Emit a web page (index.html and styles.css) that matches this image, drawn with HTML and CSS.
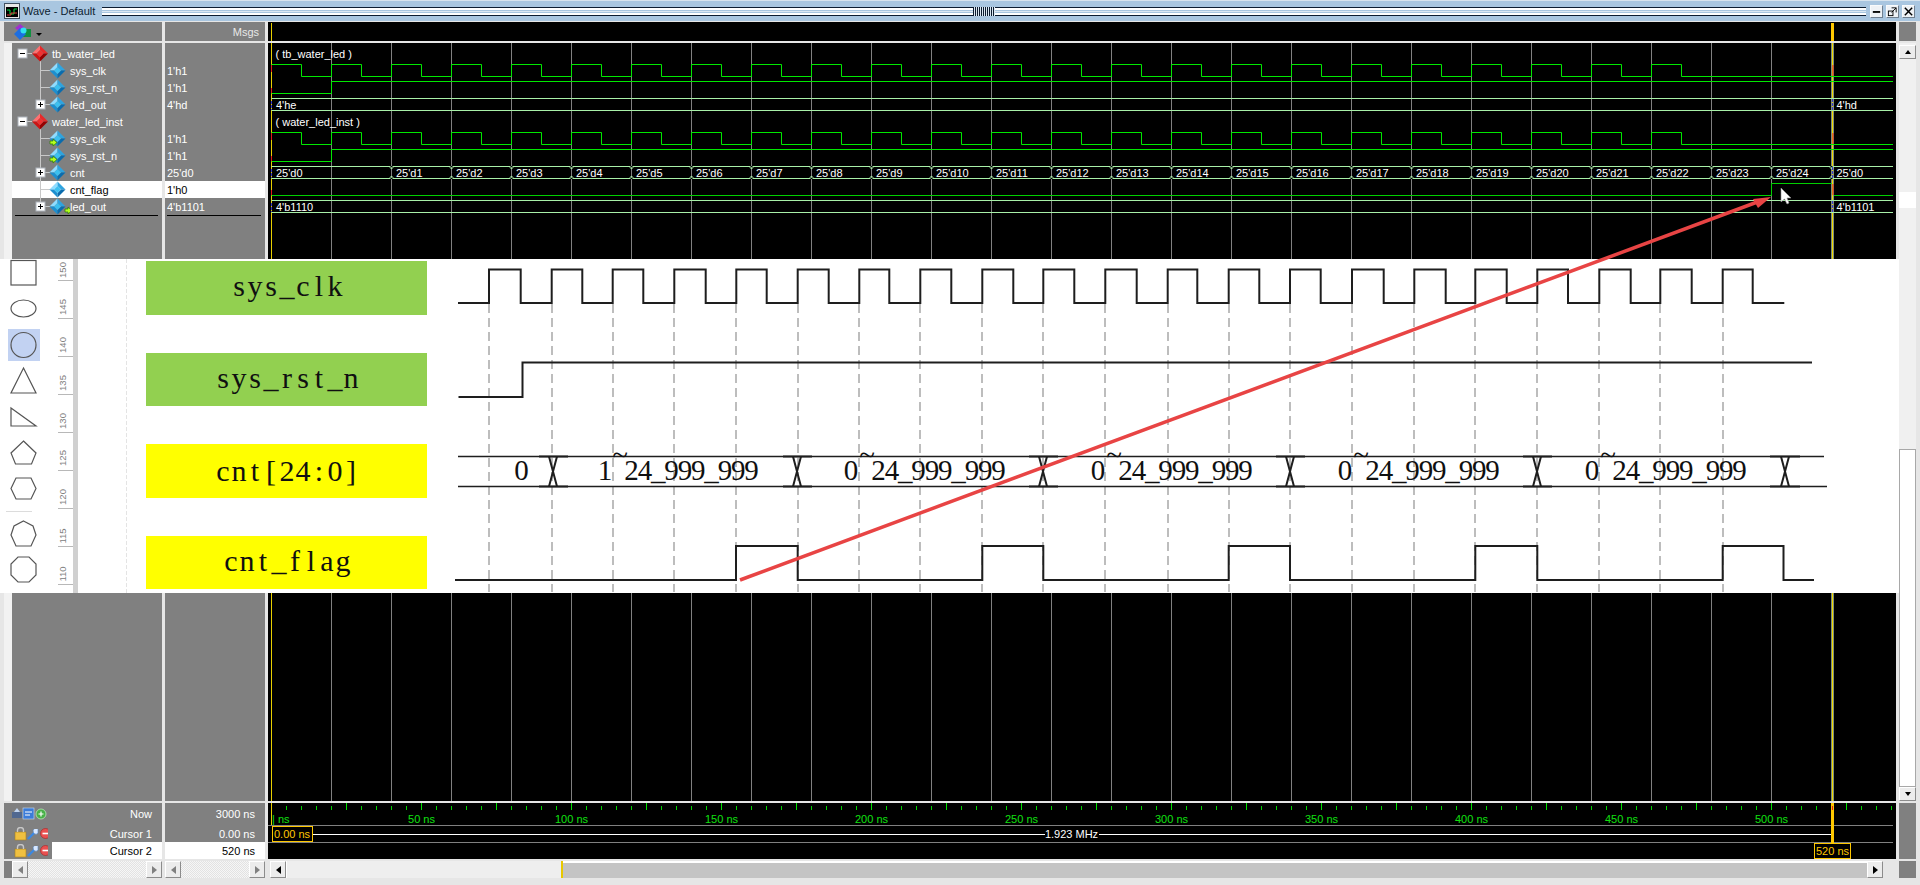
FILE: index.html
```html
<!DOCTYPE html>
<html lang="en">
<head>
<meta charset="utf-8">
<title>Wave - Default</title>
<link rel="stylesheet" href="styles.css">
</head>
<body>
<svg class="defs" aria-hidden="true">
  <defs>
    <g id="d-blue"><polygon points="0,-8 -8,0 -3.5,0 0,-3.5" fill="#8fdcff"/><polygon points="0,-8 8,0 3.5,0 0,-3.5" fill="#2ea4e0"/><polygon points="0,8 -8,0 -3.5,0 0,3.5" fill="#1c8fd0"/><polygon points="0,8 8,0 3.5,0 0,3.5" fill="#0a6cae"/><polygon points="0,-3.5 3.5,0 0,3.5 -3.5,0" fill="#3cc0f0"/></g>
    <g id="d-red"><polygon points="0,-8 -8,0 -3.5,0 0,-3.5" fill="#ff7070"/><polygon points="0,-8 8,0 3.5,0 0,-3.5" fill="#e82a2a"/><polygon points="0,8 -8,0 -3.5,0 0,3.5" fill="#cc1414"/><polygon points="0,8 8,0 3.5,0 0,3.5" fill="#960000"/><polygon points="0,-3.5 3.5,0 0,3.5 -3.5,0" fill="#f03030"/></g>
    <g id="b-minus"><rect x="-4.5" y="-4.5" width="9" height="9" fill="#fff" stroke="#aeb4bc"/><path d="M-2.5 0H2.5" stroke="#000"/></g>
    <g id="b-plus"><rect x="-4.5" y="-4.5" width="9" height="9" fill="#fff" stroke="#aeb4bc"/><path d="M-2.5 0H2.5M0 -2.5V2.5" stroke="#000"/></g>
    <polygon id="port" points="0,-1.5 3,-1.5 3,-3.5 7,0 3,3.5 3,1.5 0,1.5" fill="#b4ff20" stroke="#2c7a00" stroke-width=".7"/>
    <g id="lock"><rect x="0" y="5" width="11" height="8" fill="#f0c040" stroke="#a88020" stroke-width=".6"/><path d="M2.5 5V3a3 2.5 0 0 1 6 0V5" fill="none" stroke="#c8c8c8" stroke-width="1.4"/></g>
    <g id="wrench"><path d="M1 12 8 5" stroke="#3c88e0" stroke-width="2.4"/><path d="M7 2a3 3 0 0 0 3 5l1-1V2" fill="#d8e8ff" stroke="#5080c0" stroke-width=".6"/></g>
    <g id="stop"><circle cx="5.5" cy="5.5" r="5" fill="#e85050" stroke="#a82020" stroke-width=".6"/><path d="M2.5 5.5H8.5" stroke="#fff" stroke-width="1.6"/></g>
    <pattern id="grid" x="301" y="43" width="60" height="758" patternUnits="userSpaceOnUse"><path d="M30.5 0V758" stroke="#808080"/></pattern>
    <pattern id="busx" x="361.5" y="166" width="60" height="13" patternUnits="userSpaceOnUse"><rect x="29" y="0" width="2" height="1" fill="#000"/><rect x="29" y="12" width="2" height="1" fill="#000"/><path d="M28 .5 30 3 32 .5M28 12.5 30 10 32 12.5" fill="none" stroke="#a8f0a8"/></pattern>
    <pattern id="tick" x="271" y="803" width="15" height="8" patternUnits="userSpaceOnUse"><path d="M.5 3V7" stroke="#00d000"/></pattern>
    <pattern id="tickm" x="271" y="803" width="75" height="8" patternUnits="userSpaceOnUse"><path d="M.5 0V7" stroke="#00e000"/></pattern>
  </defs>
</svg>

<div class="window">
  <header class="titlebar">
    <svg class="appicon" width="16" height="16" viewBox="0 0 16 16"><rect x=".5" y=".5" width="15" height="15" fill="#e8e8e8" stroke="#405060"/><rect x="2" y="4" width="12" height="10" fill="#000"/><path d="M3 7h3v4h4V6h3" fill="none" stroke="#00e040"/><path d="M3 12h4v-2h6" fill="none" stroke="#e04040"/></svg>
    <span class="title">Wave - Default</span>
    <div class="grip"><div class="grip-mid"></div></div>
    <div class="winbtns">
      <span class="winbtn"><svg width="12" height="12" viewBox="0 0 12 12"><path d="M2 6.5H10" stroke="#000" stroke-width="2"/></svg></span>
      <span class="winbtn"><svg width="12" height="12" viewBox="0 0 12 12"><rect x="1.5" y="5.5" width="5" height="5" fill="none" stroke="#000"/><path d="M5 2H10V7M5 7 10 2" fill="none" stroke="#000"/></svg></span>
      <span class="winbtn"><svg width="12" height="12" viewBox="0 0 12 12"><path d="M2 2 10 10M10 2 2 10" stroke="#000" stroke-width="1.6"/></svg></span>
    </div>
  </header>

  <div class="panes">
    <!-- header row -->
    <div class="cell head-left">
      <svg width="18" height="16" viewBox="0 0 18 16"><polygon points="6,0 11,4 6,8 1,4" fill="#a030d0"/><rect x="8" y="5" width="9" height="8" fill="#109040"/><polygon points="6,4 12,10 6,16 0,10" fill="#1c6ee0"/><circle cx="9.500" cy="6.500" r="3" fill="#30e0f0"/></svg>
      <span class="drop"></span>
    </div>
    <div class="cell head-val">Msgs</div>
    <svg class="wavesvg" width="1628" height="19" viewBox="268 22 1628 19">
      <rect x="271" y="23" width="1" height="18" fill="#e8d000"/>
      <rect x="1831" y="23" width="3" height="18" fill="#ffc800"/>
    </svg>
    <div class="vs-head"></div>

    <!-- body row -->
    <div class="cell tree">
      <div class="tree-rows">
        <div class="row"><svg class="g-scope" width="40" height="17"><path d="M15 8.500H20M28.500 14V17" stroke="#c8c8c8" fill="none"/><use href="#b-minus" x="10.500" y="8.500"/><use href="#d-red" x="28" y="8.500"/></svg>tb_water_led</div>
        <div class="row"><svg class="g-sig" width="58" height="17"><path d="M28.500 0V17M28.500 8.500H38" stroke="#c8c8c8" fill="none"/><use href="#d-blue" x="45.500" y="8.500"/></svg>sys_clk</div>
        <div class="row"><svg class="g-sig" width="58" height="17"><path d="M28.500 0V17M28.500 8.500H38" stroke="#c8c8c8" fill="none"/><use href="#d-blue" x="45.500" y="8.500"/></svg>sys_rst_n</div>
        <div class="row"><svg class="g-sig" width="58" height="17"><path d="M28.500 0V4M33 8.500H38" stroke="#c8c8c8" fill="none"/><use href="#b-plus" x="28.500" y="8.500"/><use href="#d-blue" x="45.500" y="8.500"/></svg>led_out</div>
        <div class="row"><svg class="g-scope" width="40" height="17"><path d="M15 8.500H20M28.500 14V17" stroke="#c8c8c8" fill="none"/><use href="#b-minus" x="10.500" y="8.500"/><use href="#d-red" x="28" y="8.500"/></svg>water_led_inst</div>
        <div class="row"><svg class="g-sig" width="58" height="17"><path d="M28.500 0V17M28.500 8.500H38" stroke="#c8c8c8" fill="none"/><use href="#d-blue" x="45.500" y="8.500"/><use href="#port" x="38" y="12.500"/></svg>sys_clk</div>
        <div class="row"><svg class="g-sig" width="58" height="17"><path d="M28.500 0V17M28.500 8.500H38" stroke="#c8c8c8" fill="none"/><use href="#d-blue" x="45.500" y="8.500"/><use href="#port" x="38" y="12.500"/></svg>sys_rst_n</div>
        <div class="row"><svg class="g-sig" width="58" height="17"><path d="M28.500 0V4M28.500 13V17M33 8.500H38" stroke="#c8c8c8" fill="none"/><use href="#b-plus" x="28.500" y="8.500"/><use href="#d-blue" x="45.500" y="8.500"/></svg>cnt</div>
        <div class="row sel"><svg class="g-sig" width="58" height="17"><path d="M28.500 0V17M28.500 8.500H38" stroke="#c8c8c8" fill="none"/><use href="#d-blue" x="45.500" y="8.500"/></svg>cnt_flag</div>
        <div class="row"><svg class="g-sig" width="58" height="17"><path d="M28.500 0V4M33 8.500H38" stroke="#c8c8c8" fill="none"/><use href="#b-plus" x="28.500" y="8.500"/><use href="#d-blue" x="45.500" y="8.500"/><use href="#port" x="53" y="12.500"/></svg>led_out</div>
        <div class="rowend rowend-tree"></div>
      </div>
    </div>
    <div class="cell vals">
      <div class="row"></div>
      <div class="row">1'h1</div>
      <div class="row">1'h1</div>
      <div class="row">4'hd</div>
      <div class="row"></div>
      <div class="row">1'h1</div>
      <div class="row">1'h1</div>
      <div class="row">25'd0</div>
      <div class="row sel">1'h0</div>
      <div class="row">4'b1101</div>
      <div class="rowend"></div>
    </div>
    <svg class="wavesvg" width="1628" height="758" viewBox="268 43 1628 758">
      <rect x="301" y="43" width="1500" height="758" fill="url(#grid)"/>
      <rect x="1831" y="43" width="3" height="758" fill="#7c8c80"/>
      <rect x="1832" y="43" width="1" height="758" fill="#f0d800"/>
      <rect x="271" y="43" width="1" height="758" fill="#e8d000"/>

      <path id="clk" class="sig" d="M271.500 64.500h30v12h30v-12h30v12h30v-12h30v12h30v-12h30v12h30v-12h30v12h30v-12h30v12h30v-12h30v12h30v-12h30v12h30v-12h30v12h30v-12h30v12h30v-12h30v12h30v-12h30v12h30v-12h30v12h30v-12h30v12h30v-12h30v12h30v-12h30v12h30v-12h30v12h30v-12h30v12h30v-12h30v12h30v-12h30v12h30v-12h30v12h30v-12h30v12h30v-12h30v12h30v-12h30v12H1893"/>
      <path id="rst" class="sig" d="M271.500 93.500H331.500V81.500H1893"/>
      <use href="#clk" y="68"/>
      <use href="#rst" y="68"/>
      <path class="bus" d="M271.500 98.500H1893M271.500 110.500H1893M271.500 166.500H1893M271.500 178.500H1893M271.500 200.500H1893M271.500 212.500H1893"/>
      <rect x="362" y="166" width="1500" height="13" fill="url(#busx)"/>
      <path class="flag" d="M271.500 195.500H1771.500V183.500H1831.500M1834 195.500H1893"/>

      <text class="wt" x="275.500" y="58">( tb_water_led )</text>
      <text class="wt" x="275.500" y="126">( water_led_inst )</text>
      <text class="wt" x="276" y="109">4'he</text>
      <text class="wt" x="1836.500" y="109">4'hd</text>
      <text class="wt" x="276" y="211">4'b1110</text>
      <text class="wt" x="1836.500" y="211">4'b1101</text>
      <text class="wt" x="276" y="177">25'd0</text>
      <text class="wt" x="396" y="177">25'd1</text>
      <text class="wt" x="456" y="177">25'd2</text>
      <text class="wt" x="516" y="177">25'd3</text>
      <text class="wt" x="576" y="177">25'd4</text>
      <text class="wt" x="636" y="177">25'd5</text>
      <text class="wt" x="696" y="177">25'd6</text>
      <text class="wt" x="756" y="177">25'd7</text>
      <text class="wt" x="816" y="177">25'd8</text>
      <text class="wt" x="876" y="177">25'd9</text>
      <text class="wt" x="936" y="177">25'd10</text>
      <text class="wt" x="996" y="177">25'd11</text>
      <text class="wt" x="1056" y="177">25'd12</text>
      <text class="wt" x="1116" y="177">25'd13</text>
      <text class="wt" x="1176" y="177">25'd14</text>
      <text class="wt" x="1236" y="177">25'd15</text>
      <text class="wt" x="1296" y="177">25'd16</text>
      <text class="wt" x="1356" y="177">25'd17</text>
      <text class="wt" x="1416" y="177">25'd18</text>
      <text class="wt" x="1476" y="177">25'd19</text>
      <text class="wt" x="1536" y="177">25'd20</text>
      <text class="wt" x="1596" y="177">25'd21</text>
      <text class="wt" x="1656" y="177">25'd22</text>
      <text class="wt" x="1716" y="177">25'd23</text>
      <text class="wt" x="1776" y="177">25'd24</text>
      <text class="wt" x="1836.500" y="177">25'd0</text>

      <path class="mark-r" d="M271.500 65V72M271.500 88V93M271.500 133V140M271.500 156V161M271.500 190V195M1833 65V76M1833 133V144M1833 184V195"/>
      <path class="mark-b" d="M271.500 101V110M271.500 169V178M271.500 203V212M1832.500 99V110M1832.500 167V178M1832.500 201V212"/>
    </svg>
    <div class="vs">
      <div class="sb-btn vbtn"><span class="tri tri-up"></span></div>
      <div class="vtrack">
        <div class="v-top"></div>
        <div class="v-mark"></div>
        <div class="v-rest"></div>
        <div class="v-thumb"></div>
      </div>
      <div class="sb-btn vbtn"><span class="tri tri-down"></span></div>
    </div>

    <!-- footer row -->
    <div class="cell foot-left">
      <div class="frow frow-now">
        <svg class="ficons" width="36" height="14" viewBox="0 0 36 14"><rect x="0" y="5" width="10" height="6" fill="#506890"/><path d="M2 5 5 1 8 5" fill="#c0d4f0"/><rect x="11" y="1" width="11" height="11" fill="#3c7cd8" stroke="#c8dcf4" stroke-width=".6"/><path d="M13 5h7M13 8h5" stroke="#fff"/><circle cx="29" cy="7" r="5" fill="#48b048" stroke="#b8e8b8" stroke-width=".8"/><path d="M26.500 7h5M29 4.500v5" stroke="#fff" stroke-width="1.200"/></svg>
        <span class="flabel">Now</span>
      </div>
      <div class="frow">
        <svg class="ficons" width="36" height="14" viewBox="0 0 36 14"><use href="#lock" x="3" y="0"/><use href="#wrench" x="15"/><use href="#stop" x="28" y="1"/></svg>
        <span class="flabel">Cursor 1</span>
      </div>
      <div class="frow">
        <svg class="ficons" width="36" height="14" viewBox="0 0 36 14"><use href="#lock" x="3" y="0"/><use href="#wrench" x="15"/><use href="#stop" x="28" y="1"/></svg>
        <span class="flabel flabel-sel">Cursor 2</span>
      </div>
    </div>
    <div class="cell foot-val">
      <div class="frow frow-now"><span class="flabel">3000 ns</span></div>
      <div class="frow"><span class="flabel">0.00 ns</span></div>
      <div class="frow"><span class="flabel flabel-sel">520 ns</span></div>
    </div>
    <svg class="wavesvg" width="1628" height="56" viewBox="268 803 1628 56">
      <rect x="271" y="803" width="1" height="22" fill="#e8d000"/>
      <rect x="286" y="803" width="1607" height="8" fill="url(#tick)"/>
      <rect x="346" y="803" width="1547" height="8" fill="url(#tickm)"/>
      <text class="rl" x="272" y="823">| ns</text>
      <text class="rl mid" x="421.500" y="823">50 ns</text>
      <text class="rl mid" x="571.500" y="823">100 ns</text>
      <text class="rl mid" x="721.500" y="823">150 ns</text>
      <text class="rl mid" x="871.500" y="823">200 ns</text>
      <text class="rl mid" x="1021.500" y="823">250 ns</text>
      <text class="rl mid" x="1171.500" y="823">300 ns</text>
      <text class="rl mid" x="1321.500" y="823">350 ns</text>
      <text class="rl mid" x="1471.500" y="823">400 ns</text>
      <text class="rl mid" x="1621.500" y="823">450 ns</text>
      <text class="rl mid" x="1771.500" y="823">500 ns</text>
      <path d="M268 825.500H1893M268 842.500H1893" stroke="#808080"/>
      <path d="M313 834.500H1832" stroke="#fff"/>
      <rect x="1045" y="827" width="54" height="14" fill="#000"/>
      <text class="wt mid" x="1071.500" y="838">1.923 MHz</text>
      <rect x="1831" y="803" width="3" height="40" fill="#ffc800"/>
      <path d="M1832.500 806V810" stroke="#e02020"/>
      <rect x="272.500" y="826.500" width="40" height="15" fill="#000" stroke="#ffc800"/>
      <text class="cur" x="274" y="838">0.00 ns</text>
      <rect x="1814.500" y="843.500" width="36" height="15" fill="#000" stroke="#ffc800"/>
      <text class="cur" x="1816" y="855">520 ns</text>
    </svg>
    <div class="vs-foot"></div>

    <!-- scroll row -->
    <div class="cell hs hs-left">
      <div class="sb-btn hbtn"><span class="tri tri-left dim"></span></div>
      <div class="htrack"></div>
      <div class="sb-btn hbtn"><span class="tri tri-right dim"></span></div>
    </div>
    <div class="cell hs">
      <div class="sb-btn hbtn"><span class="tri tri-left dim"></span></div>
      <div class="htrack"></div>
      <div class="sb-btn hbtn"><span class="tri tri-right dim"></span></div>
    </div>
    <div class="hs hs-wave">
      <div class="sb-btn hbtn"><span class="tri tri-left"></span></div>
      <div class="wtrack-a"></div>
      <div class="wtrack-b"></div>
      <div class="sb-btn hbtn"><span class="tri tri-right"></span></div>
    </div>
    <div class="vs-foot"></div>
  </div>

  <!-- pasted picture lying over the wave window -->
  <div class="shot">
    <svg class="tools" width="78" height="334" viewBox="0 259 78 334">
      <rect x="8" y="329" width="32" height="32" fill="#c2d2f2"/>
      <g class="shape">
        <rect x="11" y="260.500" width="25" height="24.500"/>
        <ellipse cx="23.500" cy="308.500" rx="12.500" ry="8.500"/>
        <circle cx="23.500" cy="345" r="12.500"/>
        <polygon points="23.500,368 36,393 11,393"/>
        <polygon points="11,408 36,426 11,426"/>
        <polygon points="23.500,441 36,453 31.500,464 15.500,464 11,453"/>
        <polygon points="16,478 31,478 36,488.500 31,499 16,499 11,488.500"/>
        <polygon points="23.500,521 33,526 36,535 31,546 16,546 11,535 14,526"/>
        <polygon points="18,557 29,557 36,564 36,575 29,582 18,582 11,575 11,564"/>
      </g>
      <path d="M6 511.500H32" stroke="#dcdcdc"/>
      <path d="M58 280.500H73M58 318.500H73M58 356.500H73M58 394.500H73M58 432.500H73M58 470.500H73M58 508.500H73M58 546.500H73M58 584.500H73" stroke="#b8b8b8"/>
      <text class="rul" transform="translate(66 270) rotate(-90)">150</text>
      <text class="rul" transform="translate(66 307) rotate(-90)">145</text>
      <text class="rul" transform="translate(66 345) rotate(-90)">140</text>
      <text class="rul" transform="translate(66 383) rotate(-90)">135</text>
      <text class="rul" transform="translate(66 421) rotate(-90)">130</text>
      <text class="rul" transform="translate(66 458) rotate(-90)">125</text>
      <text class="rul" transform="translate(66 497) rotate(-90)">120</text>
      <text class="rul" transform="translate(66 536) rotate(-90)">115</text>
      <text class="rul" transform="translate(66 574) rotate(-90)">110</text>
      <rect x="73" y="259" width="5" height="334" fill="#d0d0d0"/>
    </svg>
    <svg class="diagram" width="1821" height="334" viewBox="78 259 1821 334">
      <path d="M126.500 259V593" stroke="#e4e4e4" stroke-dasharray="4 2"/>
      <rect x="146" y="261" width="281" height="54" fill="#92d050"/>
      <rect x="146" y="353" width="281" height="53" fill="#92d050"/>
      <rect x="146" y="444" width="281" height="54" fill="#ffff00"/>
      <rect x="146" y="536" width="281" height="53" fill="#ffff00"/>
      <text class="lab" x="239 255 271 287 303 319 335" y="296">sys_clk</text>
      <text class="lab" x="223 239 255 271 287 303 319 335 351" y="388">sys_rst_n</text>
      <text class="lab" x="223 239 255 271 287 303 319 335 351" y="481">cnt[24:0]</text>
      <text class="lab" x="231 247 263 279 295 311 327 343" y="571">cnt_flag</text>

      <path class="guides" d="M489 304V592M552 304V592M613 304V592M674 304V592M736 304V592M798 304V592M859 304V592M920 304V592M982 304V592M1043 304V592M1105 304V592M1168 304V592M1229 304V592M1290 304V592M1352 304V592M1414 304V592M1475 304V592M1537 304V592M1599 304V592M1660 304V592M1723 304V592"/>

      <path class="line" d="M458 303H489V269.500H520.700V303H551.700V269.500H582.300V303H612.700V269.500H643.300V303H674.300V269.500H705.700V303H736.300V269.500H766.700V303H797.700V269.500H828.700V303H859.300V269.500H889.300V303H920.300V269.500H951.300V303H982.300V269.500H1013.300V303H1043.300V269.500H1074.300V303H1105.300V269.500H1136.700V303H1167.700V269.500H1197.300V303H1228.700V269.500H1259.300V303H1290V269.500H1320.700V303H1352V269.500H1383.700V303H1414.300V269.500H1445.700V303H1475.300V269.500H1506.700V303H1537.300V269.500H1568V303H1599.300V269.500H1630.700V303H1660.300V269.500H1691.700V303H1722.700V269.500H1752.700V303H1784.300"/>
      <path class="line" d="M458.500 397H522.500V362.500H1812"/>
      <path class="line thin" d="M458 456.500H1824M458 486.500H1827"/>
      <path class="line" d="M539 456.500H568M539 486.500H568M783 456.500H812M783 486.500H812M1029 456.500H1058M1029 486.500H1058M1276 456.500H1305M1276 486.500H1305M1523 456.500H1552M1523 486.500H1552M1770 456.500H1800M1770 486.500H1800"/>
      <path class="line" d="M549 456.500 557 486.500M557 456.500 549 486.500M793 456.500 801 486.500M801 456.500 793 486.500M1039 456.500 1047 486.500M1047 456.500 1039 486.500M1286 456.500 1294 486.500M1294 456.500 1286 486.500M1533 456.500 1541 486.500M1541 456.500 1533 486.500M1781 456.500 1789 486.500M1789 456.500 1781 486.500"/>
      <path class="line" d="M455 580H736V546H797.700V580H982.300V546H1043.300V580H1228.700V546H1290V580H1475.300V546H1537.300V580H1722.700V546H1783.500V580H1814"/>

      <text class="busv" x="521.500" y="480">0</text>
      <text class="busv" x="605 620 631.600 645 658.300 671.600 685 698.300 711.600 725 738.300 751.600" y="480" dy="0 -15 15">1~24_999_999</text>
      <text class="busv" x="851 867 878.600 892 905.300 918.600 932 945.300 958.600 972 985.300 998.600" y="480" dy="0 -15 15">0~24_999_999</text>
      <text class="busv" x="1098 1114 1125.600 1139 1152.300 1165.600 1179 1192.300 1205.600 1219 1232.300 1245.600" y="480" dy="0 -15 15">0~24_999_999</text>
      <text class="busv" x="1345 1361 1372.600 1386 1399.300 1412.600 1426 1439.300 1452.600 1466 1479.300 1492.600" y="480" dy="0 -15 15">0~24_999_999</text>
      <text class="busv" x="1592 1608 1619.600 1633 1646.300 1659.600 1673 1686.300 1699.600 1713 1726.300 1739.600" y="480" dy="0 -15 15">0~24_999_999</text>
    </svg>
  </div>

  <!-- annotation arrow and mouse pointer lying over everything -->
  <svg class="annot" width="1920" height="885" viewBox="0 0 1920 885" aria-hidden="true">
    <path d="M740 580 1760 201" stroke="#e84444" stroke-width="3.500"/>
    <polygon points="1771,197 1753,199 1758,208" fill="#e84444"/>
    <polygon points="1781,188 1781,202 1784.500,199 1787,204 1789,203 1787,198 1791,198" fill="#fff" stroke="#909090" stroke-width=".6"/>
  </svg>
</div>
</body>
</html>
```

FILE: styles.css
```css
* { box-sizing: border-box; }
html, body { margin: 0; height: 100%; overflow: hidden; }
body { font: 11px "Liberation Sans", Arial, sans-serif; background: #e6e6e6; color: #fff; }
.defs { position: absolute; width: 0; height: 0; }
svg { display: block; flex: none; }

.window { position: relative; width: 1920px; height: 885px; display: flex; flex-direction: column; }

/* title bar */
.titlebar { height: 21px; background: #a9c6e0; border-top: 1px solid #d8e4ee; display: flex; align-items: center; padding: 0 3px 0 4px; }
.title { margin-left: 3px; width: 79px; color: #0c1c30; font-size: 11px; white-space: nowrap; }
.grip { width: 1764px; height: 9px; position: relative; border-top: 1px solid #0c1c30; border-bottom: 1px solid #0c1c30; background: linear-gradient(#fff 0 2px, #a9c6e0 2px 3px, #dce8f2 3px 4px, #a9c6e0 4px 5px, #fff 5px); }
.grip-mid { position: absolute; left: 871px; top: -1px; width: 22px; height: 9px; background: repeating-linear-gradient(90deg, #0c1c30 0 1px, #dce8f2 1px 2px); }
.winbtns { display: flex; gap: 3px; margin-left: 4px; }
.winbtn { width: 13px; height: 13px; background: #eef2f6; border: 1px solid #f8fafc; border-right-color: #708090; border-bottom-color: #708090; }
.winbtn svg { width: 11px; height: 11px; }

/* four-column layout */
.panes { flex: 1; display: grid; grid-template-columns: 158px 100px 1628px 17px; grid-template-rows: 19px 758px 56px 17px; column-gap: 3px; row-gap: 2px; padding: 1px 0 0 4px; background: #e6e6e6; }
.cell { background: #808080; min-width: 0; }

.head-left { display: flex; align-items: center; padding-left: 10px; gap: 4px; }
.drop { width: 0; height: 0; margin-top: 6px; border: 3px solid transparent; border-top: 3px solid #000; border-bottom: 0; }
.head-val { display: flex; align-items: center; justify-content: flex-end; padding-right: 6px; color: #e8e8e8; }
.vs-head, .vs-foot { background: #808080; }
.wavesvg { background: #000; }

/* signal tree */
.tree { padding-left: 8px; background: linear-gradient(90deg, #f2f2f2 8px, #808080 8px); }
.tree-rows { padding-top: 2px; }
.vals { padding-top: 2px; }
.row { height: 17px; display: flex; align-items: center; white-space: nowrap; padding-left: 0; }
.vals .row { padding-left: 2px; }
.row.sel { background: #fff; color: #000; }
.rowend { height: 1px; margin: 0 4px 0 2px; background: #000; }
.rowend-tree { margin-left: 3px; }

/* vertical scroll */
.vs { display: flex; flex-direction: column; background: #f0f0f0; padding-top: 2px; }
.vtrack { flex: 1; display: flex; flex-direction: column; }
.v-top { height: 133px; }
.v-mark { height: 16px; background: #fff; }
.v-rest { height: 241px; }
.v-thumb { flex: 1; background: #fff; border: 1px solid #a8a8a8; }
.vbtn { height: 14px; flex: none; }
.sb-btn { display: flex; align-items: center; justify-content: center; background: #ececec; border: 1px solid; border-color: #fff #8c8c8c #8c8c8c #fff; }
.tri { width: 0; height: 0; border: 3px solid transparent; }
.tri-up { border-bottom: 4px solid #000; border-top: 0; }
.tri-down { border-top: 4px solid #000; border-bottom: 0; }
.tri-left { border-right: 5px solid #000; border-left: 0; border-top-width: 4px; border-bottom-width: 4px; }
.tri-right { border-left: 5px solid #000; border-right: 0; border-top-width: 4px; border-bottom-width: 4px; }
.tri.dim { border-left-color: transparent; border-right-color: transparent; }
.tri-left.dim { border-right-color: #808080; }
.tri-right.dim { border-left-color: #808080; }

/* footer */
.frow { height: 17px; display: flex; align-items: center; justify-content: space-between; }
.frow-now { height: 22px; }
.foot-left { padding-left: 8px; }
.foot-left .ficons { margin-right: auto; }
.flabel { flex: 1; text-align: right; padding-right: 10px; height: 100%; display: flex; align-items: center; justify-content: flex-end; }
.foot-left .flabel { flex: none; width: 110px; margin-left: -26px; }
.foot-left .frow-now .flabel { background: none; }
.flabel-sel { background: #fff; color: #000; }

/* horizontal scrolls */
.hs { display: flex; align-items: stretch; }
.hs-left { padding-left: 8px; }
.hbtn { width: 16px; flex: none; }
.htrack { flex: 1; background: repeating-conic-gradient(#f6f6f6 0 25%, #e2e2e2 0 50%) 0 0 / 2px 2px; }
.hs-wave { background: #e6e6e6; padding-left: 2px; padding-right: 13px; }
.wtrack-a { width: 277px; background: #eeeeee; border-left: 1px solid #fff; border-right: 2px solid #e8c800; }
.wtrack-b { flex: 1; background: #c4c4c4; border-top: 2px solid #fff; }

/* SVG text */
.wt { fill: #fff; font: 11px "Liberation Sans", Arial, sans-serif; }
.mid { text-anchor: middle; }
.rl { fill: #10e010; font: 11px "Liberation Sans", Arial, sans-serif; }
.cur { fill: #ffc800; font: 11px "Liberation Sans", Arial, sans-serif; }
.sig { fill: none; stroke: #00e800; }
.flag { fill: none; stroke: #00d000; }
.bus { fill: none; stroke: #a8f0a8; }
.mark-r { stroke: #e81818; fill: none; }
.mark-b { stroke: #3838c8; fill: none; stroke-dasharray: 3 1; }

/* pasted picture */
.shot { position: absolute; left: 0; top: 259px; width: 1899px; height: 334px; background: #fff; display: flex; }
.shape { fill: none; stroke: #555; stroke-width: 1.200; }
.rul { fill: #808080; font: 9.500px "Liberation Sans", Arial, sans-serif; text-anchor: middle; }
.lab { fill: #101010; font: 30px "Liberation Serif", "Times New Roman", serif; text-anchor: middle; }
.busv { fill: #101010; font: 29px "Liberation Serif", "Times New Roman", serif; text-anchor: middle; }
.guides { stroke: #bdbdbd; stroke-width: 2; stroke-dasharray: 9 5; fill: none; }
.line { fill: none; stroke: #1e1e1e; stroke-width: 2; }
.line.thin { stroke-width: 1.500; }

.annot { position: absolute; left: 0; top: 0; pointer-events: none; }
```
